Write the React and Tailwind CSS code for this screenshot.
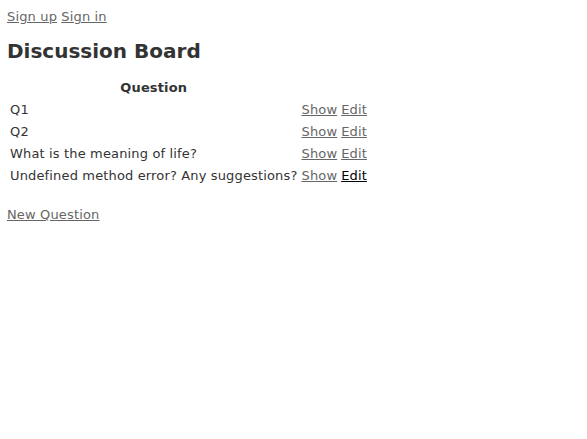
const questions = [
  { id: 1, title: 'Q1' },
  { id: 2, title: 'Q2' },
  { id: 3, title: 'What is the meaning of life?' },
  { id: 4, title: 'Undefined method error? Any suggestions?' },
];

export default function App() {
  return (
    <div
      className="m-[7px] mt-[8px] text-[13px] leading-[18px] tracking-[0.15px] text-[#333]"
      style={{ fontFamily: '"DejaVu Sans", Verdana, sans-serif' }}
    >
      <div>
        <a href="#" className="underline text-[#666]">Sign up</a>{' '}
        <a href="#" className="underline text-[#666]">Sign in</a>
      </div>

      <h1 className="text-[20px] leading-[24px] tracking-normal font-bold mt-[13px] mb-[13px]">Discussion Board</h1>

      <table className="border-separate border-spacing-[2px]">
        <thead>
          <tr>
            <th className="p-[1px] text-center font-bold">Question</th>
            <th className="p-[1px]"></th>
            <th className="p-[1px]"></th>
          </tr>
        </thead>
        <tbody>
          {questions.map((q) => (
            <tr key={q.id}>
              <td className="p-[1px] text-left">{q.title}</td>
              <td className="p-[1px]">
                <a href="#" className="underline text-[#666]">Show</a>
              </td>
              <td className="p-[1px]">
                <a href="#" className={`underline ${q.id === 4 ? 'text-black' : 'text-[#666]'}`}>Edit</a>
              </td>
            </tr>
          ))}
        </tbody>
      </table>

      <br />
      <a href="#" className="underline text-[#666]">New Question</a>
    </div>
  );
}
